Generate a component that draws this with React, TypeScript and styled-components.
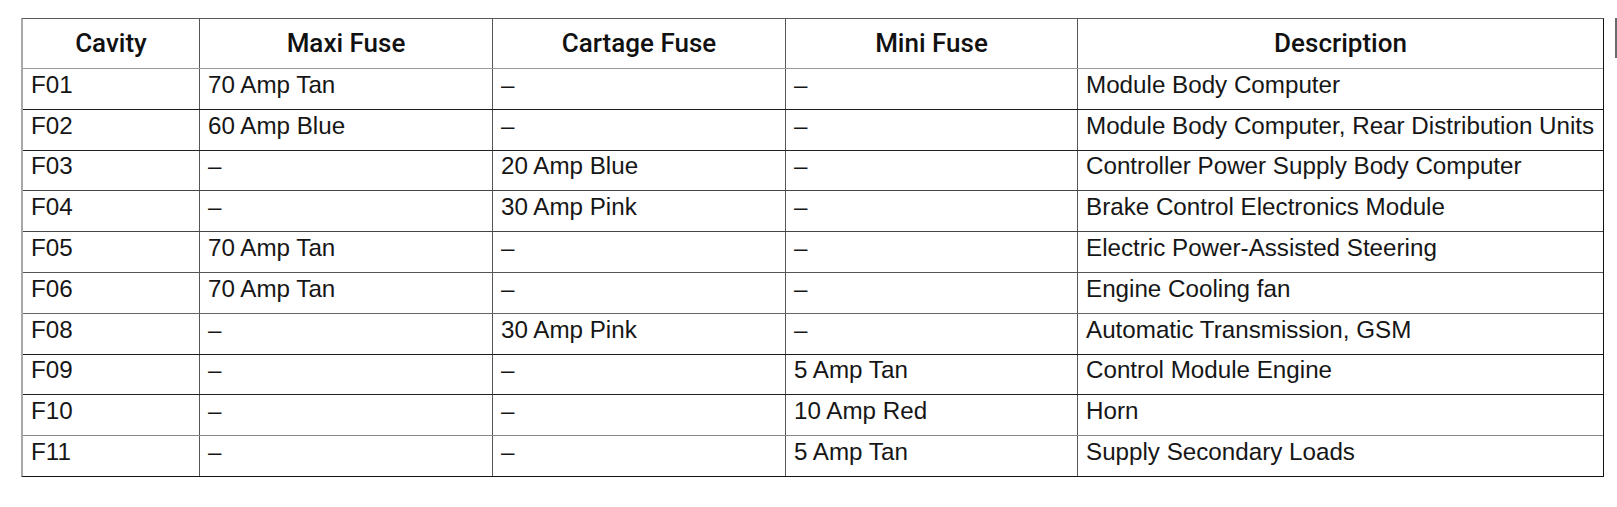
import * as React from 'react';
import styled, { createGlobalStyle } from 'styled-components';

const GlobalStyle = createGlobalStyle`
	html, body {
		margin: 0;
		padding: 0;
		background: #fff;
	}
`

const COLUMNS = '177px 293px 293px 292px 1fr';

const Page = styled.div`
	display: flex;
	align-items: flex-start;
	padding: 18px 0 0 21px;
	width: 1617px;
	height: 507px;
	box-sizing: border-box;
	background: #fff;
`

const Table = styled.div`
	display: flex;
	flex-direction: column;
	width: 1583px;
	box-sizing: border-box;
	border-top: 1px solid #5a5a5a;
	border-left: 2px solid #a8a8a8;
	border-right: 1px solid #111;
	border-bottom: 1px solid #111;
`

const Row = styled.div<{ $head?: boolean; $line: string }>`
	display: grid;
	grid-template-columns: ${COLUMNS};
	height: ${(p) => (p.$head ? '49px' : '39.8px')};
	border-bottom: 1px solid ${(p) => p.$line};

	&:last-child {
		border-bottom: none;
	}
`

const HeadCell = styled.div`
	display: flex;
	align-items: center;
	justify-content: center;
	border-right: 1px solid #555;
	font-family: Roboto, 'Liberation Sans', sans-serif;
	font-weight: 500;
	font-size: 26px;
	color: #111;
	padding-bottom: 1px;

	&:last-child {
		border-right: none;
	}
`

const Cell = styled.div`
	display: flex;
	align-items: center;
	padding: 0 0 8px 8px;
	border-right: 1px solid #555;
	font-family: 'Liberation Sans', Arial, sans-serif;
	font-size: 24.2px;
	color: #161616;
	white-space: nowrap;

	&:last-child {
		border-right: none;
	}
`

const Edge = styled.div`
	width: 2px;
	height: 40px;
	margin-left: 11px;
	background: #6a6a6a;
`

const DASH = '\u2013';

const headers = ['Cavity', 'Maxi Fuse', 'Cartage Fuse', 'Mini Fuse', 'Description'];

const rows: { line: string; cells: string[] }[] = [
	{ line: '#1a1a1a', cells: ['F01', '70 Amp Tan', DASH, DASH, 'Module Body Computer'] },
	{ line: '#222', cells: ['F02', '60 Amp Blue', DASH, DASH, 'Module Body Computer, Rear Distribution Units'] },
	{ line: '#444', cells: ['F03', DASH, '20 Amp Blue', DASH, 'Controller Power Supply Body Computer'] },
	{ line: '#444', cells: ['F04', DASH, '30 Amp Pink', DASH, 'Brake Control Electronics Module'] },
	{ line: '#555', cells: ['F05', '70 Amp Tan', DASH, DASH, 'Electric Power-Assisted Steering'] },
	{ line: '#666', cells: ['F06', '70 Amp Tan', DASH, DASH, 'Engine Cooling fan'] },
	{ line: '#1a1a1a', cells: ['F08', DASH, '30 Amp Pink', DASH, 'Automatic Transmission, GSM'] },
	{ line: '#222', cells: ['F09', DASH, DASH, '5 Amp Tan', 'Control Module Engine'] },
	{ line: '#888', cells: ['F10', DASH, DASH, '10 Amp Red', 'Horn'] },
	{ line: '#111', cells: ['F11', DASH, DASH, '5 Amp Tan', 'Supply Secondary Loads'] },
];

const App = () => {
	return (
		<>
			<GlobalStyle />
			<Page>
				<Table>
					<Row $head $line="#9a9a9a">
						{headers.map((h) => (
							<HeadCell key={h}>{h}</HeadCell>
						))}
					</Row>
					{rows.map((r) => (
						<Row key={r.cells[0]} $line={r.line}>
							{r.cells.map((c, i) => (
								<Cell key={i}>{c}</Cell>
							))}
						</Row>
					))}
				</Table>
				<Edge />
			</Page>
		</>
	)
}

export default App;
